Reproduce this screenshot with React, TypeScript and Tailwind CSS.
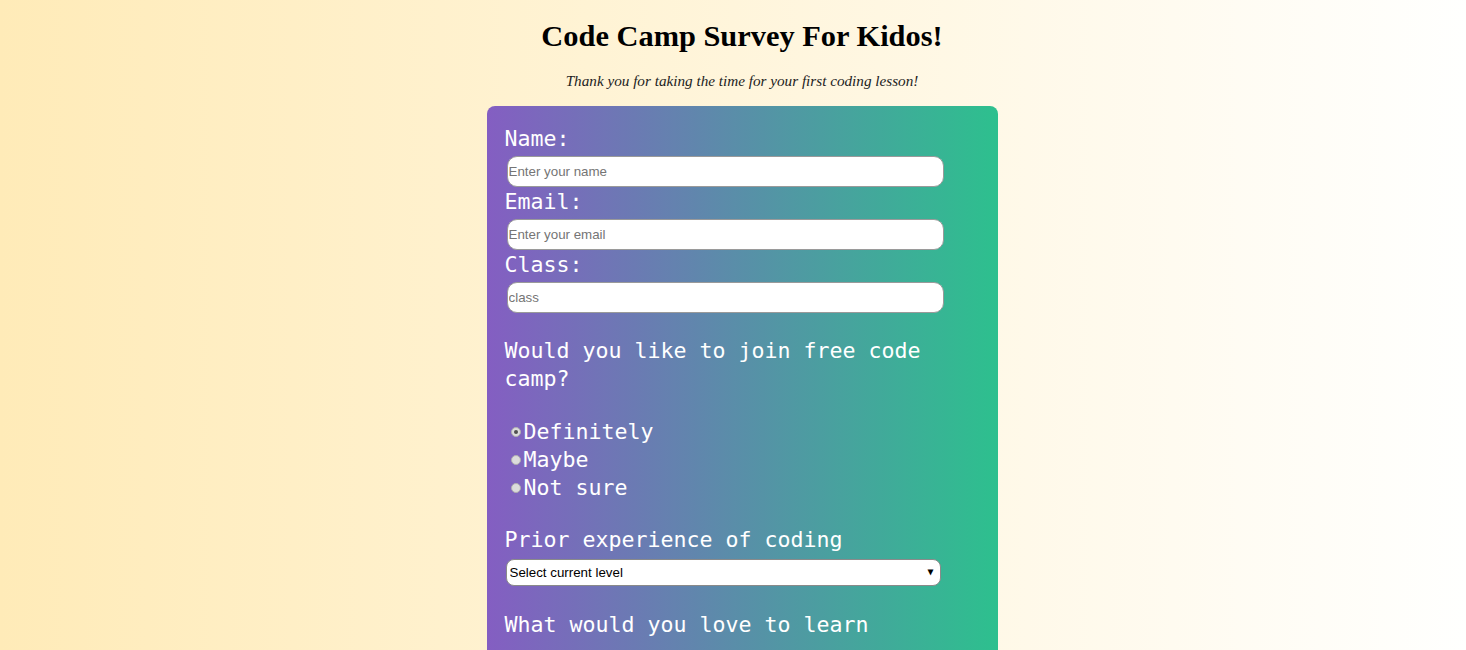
const labelCls = 'block text-[21.6px] leading-[28px] text-white';
const inputCls =
  'block w-[437px] h-[31px] ml-[2px] rounded-[10px] border border-[#9a9a9a] bg-white px-[1px] text-[13.33px] text-black placeholder:text-[#757575] outline-none';

function Radio({ label, checked }: { label: string; checked?: boolean }) {
  return (
    <label className="flex items-center h-[28px] pl-[6px]">
      <span className="flex items-center justify-center w-[10px] h-[10px] mr-[3px] rounded-full bg-[#dcdcdc] border border-[#b0b0b0]">
        {checked && <span className="w-[4px] h-[4px] rounded-full bg-[#505050]" />}
      </span>
      <span className="text-[21.6px] leading-[28px] text-white">{label}</span>
    </label>
  );
}

export default function App() {
  return (
    <div
      className="min-h-screen w-full bg-[linear-gradient(to_right,#ffebb8,#fffffe)] flex flex-col items-center pl-[18px] overflow-hidden"
      style={{ fontFamily: '"Liberation Serif", serif' }}
    >
      <h1 className="mt-[18px] h-[37px] leading-[37px] text-[30.4px] font-bold text-black">
        Code Camp Survey For Kidos!
      </h1>
      <p className="mt-[17px] h-[18px] leading-[18px] text-[15.2px] italic text-[#222]">
        Thank you for taking the time for your first coding lesson!
      </p>

      <form
        className="mt-[16px] w-[511px] rounded-lg bg-[linear-gradient(to_right,#845ec2,#2dc08e)] px-[18px] pt-[19px] pb-[40px]"
        style={{ fontFamily: '"DejaVu Sans Mono", monospace' }}
      >
        <label className={labelCls}>Name:</label>
        <input className={`${inputCls} mt-[3px]`} placeholder="Enter your name" style={{ fontFamily: '"Liberation Sans", Arial, sans-serif' }} />
        <label className={`${labelCls} mt-[1px]`}>Email:</label>
        <input className={`${inputCls} mt-[3px]`} placeholder="Enter your email" style={{ fontFamily: '"Liberation Sans", Arial, sans-serif' }} />
        <label className={`${labelCls} mt-[1px]`}>Class:</label>
        <input className={`${inputCls} mt-[3px]`} placeholder="class" style={{ fontFamily: '"Liberation Sans", Arial, sans-serif' }} />

        <p className="mt-[24px] text-[21.6px] leading-[28px] text-white">
          Would you like to join free code camp?
        </p>

        <div className="mt-[25px] flex flex-col">
          <Radio label="Definitely" checked />
          <Radio label="Maybe" />
          <Radio label="Not sure" />
        </div>

        <p className="mt-[24px] text-[21.6px] leading-[28px] text-white">Prior experience of coding</p>
        <div className="relative mt-[5px] ml-[1px] w-[435px]">
          <select
            className="block w-full h-[27px] appearance-none rounded-[8px] border border-[#8a8a8a] bg-white pl-[3px] text-[13.33px] text-black outline-none"
            style={{ fontFamily: '"Liberation Sans", Arial, sans-serif' }}
          >
            <option>Select current level</option>
            <option>Beginner</option>
            <option>Intermediate</option>
            <option>Advanced</option>
          </select>
          <span className="pointer-events-none absolute right-[7px] top-[6px] text-[10px] leading-[14px] text-black">▼</span>
        </div>

        <p className="mt-[25px] text-[21.6px] leading-[28px] text-white">What would you love to learn</p>
      </form>
    </div>
  );
}
